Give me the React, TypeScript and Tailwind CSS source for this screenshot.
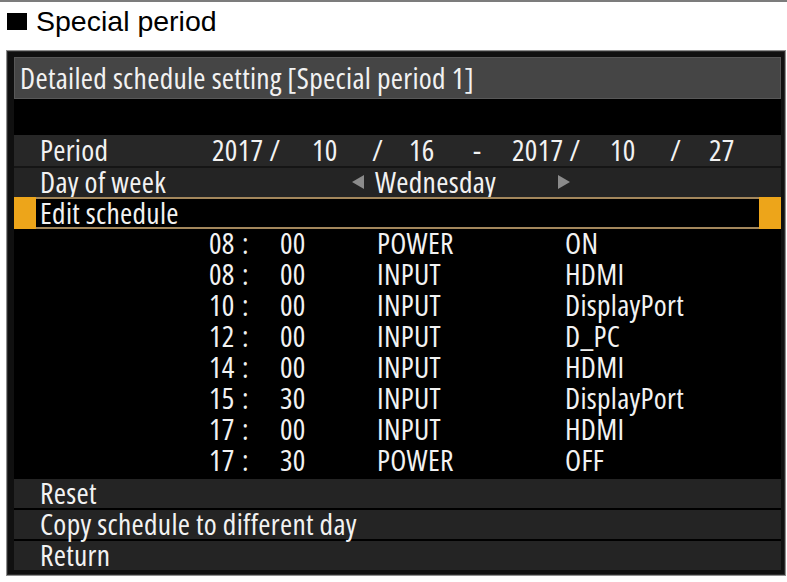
type Entry = [string, string, string, string];

const schedule: Entry[] = [
  ['08', '00', 'POWER', 'ON'],
  ['08', '00', 'INPUT', 'HDMI'],
  ['10', '00', 'INPUT', 'DisplayPort'],
  ['12', '00', 'INPUT', 'D_PC'],
  ['14', '00', 'INPUT', 'HDMI'],
  ['15', '30', 'INPUT', 'DisplayPort'],
  ['17', '00', 'INPUT', 'HDMI'],
  ['17', '30', 'POWER', 'OFF'],
];

function Arrow({ dir }: { dir: 'left' | 'right' }) {
  return (
    <svg width="14" height="16" viewBox="0 0 14 16" className="shrink-0">
      {dir === 'left' ? (
        <polygon points="13,1 13,15 1,8" fill="#8b8b8b" />
      ) : (
        <polygon points="1,1 1,15 13,8" fill="#8b8b8b" />
      )}
    </svg>
  );
}

function MenuRow({ label }: { label: string }) {
  return (
    <div className="flex h-[31px] items-center border-t-2 border-black bg-[#242424] pb-[1px] pl-[26px]">
      {label}
    </div>
  );
}

export default function App() {
  return (
    <div className="h-[582px] w-[787px] overflow-hidden bg-white">
      <div className="h-[2px] bg-[#7c7c7c]" />
      <div className="flex h-[38px] items-center pl-[7px] font-['Liberation_Sans',Arial,sans-serif]">
        <div className="mr-[9px] h-[17px] w-[20px] bg-black" />
        <span className="text-[28.5px] leading-none text-black">Special period</span>
      </div>

      <div className="ml-[6px] mt-[10px] w-[780px] border border-[#8e8e8e]">
        <div className="border border-[#2c2c2c] bg-[#101010] pb-[4px] pl-[6px] pr-[3px] pt-[5px] font-['Open_Sans',sans-serif] text-[29.5px] leading-none font-stretch-condensed tracking-[0.3px] text-[#f2f2f2]">
          <div className="flex h-[42px] items-center border border-[#585858] bg-[#454545] pl-[5px]">
            Detailed schedule setting [Special period 1]
          </div>
          <div className="h-[36px] bg-black" />

          <div className="flex h-[31px] items-center bg-[#272727] pb-[2px] pl-[26px]">
            <span className="w-[172px] shrink-0">Period</span>
            <span className="w-[100px] shrink-0">2017 /</span>
            <span className="w-[60px] shrink-0">10</span>
            <span className="w-[37px] shrink-0">/</span>
            <span className="w-[64px] shrink-0">16</span>
            <span className="w-[39px] shrink-0">-</span>
            <span className="w-[98px] shrink-0">2017 /</span>
            <span className="w-[60px] shrink-0">10</span>
            <span className="w-[39px] shrink-0">/</span>
            <span>27</span>
          </div>

          <div className="flex h-[31px] items-center border-t-2 border-[#151515] bg-[#242424] pb-[1px] pl-[26px]">
            <span className="w-[311px] shrink-0">Day of week</span>
            <Arrow dir="left" />
            <span className="ml-[10px] w-[182px] shrink-0">Wednesday</span>
            <Arrow dir="right" />
          </div>

          <div className="flex h-[32px]">
            <div className="w-[22px] bg-[#eda51a]" />
            <div className="flex flex-1 items-center border-y-2 border-[#a3875c] bg-black pb-[1px] pl-[4px]">
              Edit schedule
            </div>
            <div className="w-[22px] bg-[#eda51a]" />
          </div>

          <div className="bg-black">
            {schedule.map(([h, m, cmd, val], i) => (
              <div key={i} className="flex h-[31px] items-center pb-[3px] pl-[195px]">
                <span className="w-[33px] shrink-0">{h}</span>
                <span className="w-[38px] shrink-0">:</span>
                <span className="w-[97px] shrink-0">{m}</span>
                <span className="w-[188px] shrink-0">{cmd}</span>
                <span>{val}</span>
              </div>
            ))}
          </div>

          <MenuRow label="Reset" />
          <MenuRow label="Copy schedule to different day" />
          <MenuRow label="Return" />
        </div>
      </div>
    </div>
  );
}
